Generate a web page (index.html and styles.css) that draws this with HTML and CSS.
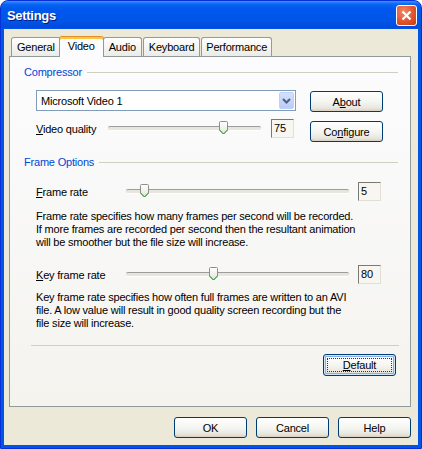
FILE: index.html
```html
<!DOCTYPE html>
<html lang="en">
  <head>
    <meta charset="UTF-8" />
    <meta name="viewport" content="width=device-width, initial-scale=1.0" />
    <title>Settings</title>
    <link rel="stylesheet" href="styles.css">
  </head>
  <body>
    <svg width="0" height="0" class="defs">
      <defs>
        <linearGradient id="thumbFill" x1="0" y1="0" x2="0" y2="1">
          <stop offset="0" stop-color="#ffffff" />
          <stop offset="1" stop-color="#e4e3dc" />
        </linearGradient>
        <symbol id="thumb" viewBox="0 0 9 14">
          <path d="M0.5 1.5 Q0.5 0.5 1.5 0.5 H7.5 Q8.5 0.5 8.5 1.5 V9 L4.5 13 L0.5 9 Z" fill="url(#thumbFill)" stroke="#8e8f86" />
          <path d="M0.5 9 L4.5 13 L8.5 9" fill="none" stroke="#1fa31f" />
        </symbol>
      </defs>
    </svg>

    <div class="window">
      <div class="titlebar">
        <div class="title">Settings</div>
        <div class="close-btn">
          <svg width="11" height="11" viewBox="0 0 11 11">
            <path d="M1.5 1.5 L9.5 9.5 M9.5 1.5 L1.5 9.5" stroke="#fff" stroke-width="2.2" />
          </svg>
        </div>
      </div>

      <div class="client">
        <div class="tabs">
          <div class="tab">General</div>
          <div class="tab active">Video</div>
          <div class="tab">Audio</div>
          <div class="tab">Keyboard</div>
          <div class="tab">Performance</div>
        </div>

        <div class="tab-panel">
          <div class="group-title">Compressor</div>
          <div class="compressor">
            <div class="compressor-fields">
              <div class="combo">
                <span class="combo-text">Microsoft Video 1</span>
                <span class="combo-arrow">
                  <svg width="9" height="6" viewBox="0 0 9 6">
                    <polyline points="1,1 4.5,4.5 8,1" fill="none" stroke="#4d6185" stroke-width="2" />
                  </svg>
                </span>
              </div>
              <div class="quality-row">
                <span class="quality-label"><u>V</u>ideo quality</span>
                <div class="slider quality-slider">
                  <svg class="thumb" style="left: 75%"><use href="#thumb" /></svg>
                </div>
                <div class="value-box">75</div>
              </div>
            </div>
            <div class="compressor-buttons">
              <button class="btn">A<u>b</u>out</button>
              <button class="btn">Co<u>n</u>figure</button>
            </div>
          </div>

          <div class="group-title frame-title">Frame Options</div>
          <div class="slider-row first">
            <span class="row-label"><u>F</u>rame rate</span>
            <div class="slider frame-slider">
              <svg class="thumb" style="left: 8.2%"><use href="#thumb" /></svg>
            </div>
            <div class="value-box">5</div>
          </div>
          <p class="note">
            Frame rate specifies how many frames per second will be recorded.<br>
            If more frames are recorded per second then the resultant animation<br>
            will be smoother but the file size will increase.
          </p>

          <div class="slider-row second">
            <span class="row-label"><u>K</u>ey frame rate</span>
            <div class="slider frame-slider">
              <svg class="thumb" style="left: 39%"><use href="#thumb" /></svg>
            </div>
            <div class="value-box">80</div>
          </div>
          <p class="note note-key">
            Key frame rate specifies how often full frames are written to an AVI<br>
            file. A low value will result in good quality screen recording but the<br>
            file size will increase.
          </p>

          <div class="separator"></div>
          <div class="default-row">
            <button class="btn btn-default"><span class="focus"><u>D</u>efault</span></button>
          </div>
        </div>

        <div class="actions">
          <button class="btn">OK</button>
          <button class="btn">Cancel</button>
          <button class="btn">Help</button>
        </div>
      </div>
    </div>
  </body>
</html>
```

FILE: styles.css
```css
* {
  margin: 0;
  padding: 0;
  box-sizing: border-box;
}

body {
  font-family: "Liberation Sans", Arial, sans-serif;
  font-size: 11px;
  letter-spacing: -0.2px;
  color: #000;
  background-color: #fff;
}

.defs {
  position: absolute;
}

/* window frame + caption */
.window {
  width: 422px;
  height: 449px;
  display: flex;
  flex-direction: column;
  border: 1px solid #0831d9;
  border-radius: 8px 8px 0 0;
  overflow: hidden;
  background: linear-gradient(
    180deg,
    #3d95ff 0px,
    #0a66f2 3px,
    #0058ee 7px,
    #0055e8 20px,
    #004bdc 26px,
    #0055e5 28px,
    #0055e5 100%
  );
}

.titlebar {
  height: 28px;
  display: flex;
  align-items: center;
  padding: 0 4px 0 6px;
}

.title {
  font-size: 13px;
  font-weight: bold;
  letter-spacing: -0.3px;
  color: #fff;
  text-shadow: 1px 1px 0 #0a1883;
  margin-top: 1px;
}

.close-btn {
  margin-left: auto;
  margin-top: 1px;
  width: 21px;
  height: 21px;
  border: 1px solid #fff;
  border-radius: 3px;
  background: radial-gradient(circle at 35% 30%, #f0896a 0%, #e0552c 55%, #c83c14 100%);
  display: flex;
  align-items: center;
  justify-content: center;
}

.client {
  flex: 1;
  margin: 0 3px 3px;
  background-color: #ece9d8;
  padding: 7px 7px 0 5px;
}

/* tabs */
.tabs {
  display: flex;
  align-items: flex-end;
  height: 20px;
  padding-left: 2px;
}

.tab {
  height: 19px;
  padding: 0 5px;
  line-height: 18px;
  border: 1px solid #919b9c;
  border-bottom: none;
  border-radius: 3px 3px 0 0;
  background: linear-gradient(180deg, #ffffff, #ecebe6);
  margin-right: 1px;
}

.tab:last-child {
  padding: 0 4px;
}

.tab.active {
  position: relative;
  z-index: 1;
  height: 21px;
  margin: 0 -1px -1px -3px;
  padding: 0 8px;
  border-top-color: #e68b2c;
  background-color: #fcfcfe;
  background-image: none;
  box-shadow: inset 0 2px 0 #ffc83c;
}

.tab-panel {
  height: 351px;
  border: 1px solid #919b9c;
  background: linear-gradient(180deg, #fcfcfe, #f4f3ee);
  padding: 9px 12px 0 14px;
}

.group-title {
  display: flex;
  align-items: center;
  gap: 5px;
  line-height: 13px;
  color: #0046d5;
}

.group-title::after {
  content: "";
  flex: 1;
  height: 1px;
  background-color: #d0d0bf;
}

/* compressor block */
.compressor {
  display: flex;
  gap: 14px;
  margin: 11px 0 0 12px;
}

.compressor-fields {
  width: 260px;
}

.combo {
  height: 21px;
  display: flex;
  align-items: center;
  padding: 1px;
  border: 1px solid #7f9db9;
  background-color: #fff;
}

.combo-text {
  flex: 1;
  padding-left: 3px;
}

.combo-arrow {
  width: 15px;
  height: 17px;
  display: flex;
  align-items: center;
  justify-content: center;
  border: 1px solid #bfd1fb;
  border-radius: 2px;
  background: linear-gradient(180deg, #d4e0fd, #b9cbf7);
}

.quality-row {
  display: flex;
  align-items: center;
  height: 19px;
  margin-top: 8px;
}

.quality-label {
  width: 72px;
}

.quality-slider {
  width: 153px;
}

.quality-row .value-box {
  margin-left: 10px;
}

.compressor-buttons {
  display: flex;
  flex-direction: column;
  gap: 9px;
  padding-top: 1px;
}

/* sliders */
.slider {
  position: relative;
  height: 19px;
}

.slider::before {
  content: "";
  position: absolute;
  left: 0;
  right: 0;
  top: 7px;
  height: 3px;
  border-top: 1px solid #9d9c99;
  border-bottom: 1px solid #fff;
  border-radius: 2px;
  background-color: #e6e5de;
}

.thumb {
  position: absolute;
  top: 2px;
  width: 9px;
  height: 14px;
  margin-left: -4px;
}

.value-box {
  width: 23px;
  height: 19px;
  padding-left: 2px;
  line-height: 17px;
  border: 1px solid;
  border-color: #7a7a72 #e2e0d6 #e2e0d6 #7a7a72;
  background-color: #f7f6f1;
}

/* frame options */
.frame-title {
  margin-top: 14px;
}

.slider-row {
  display: flex;
  align-items: center;
  height: 19px;
  margin-left: 12px;
}

.slider-row.first {
  margin-top: 13px;
}

.slider-row.second {
  margin-top: 16px;
}

.row-label {
  width: 90px;
}

.frame-slider {
  width: 223px;
}

.slider-row .value-box {
  margin-left: 9px;
}

.note {
  margin: 9px 0 0 12px;
  line-height: 13px;
  white-space: nowrap;
}

.note-key {
  margin-top: 7px;
}

.separator {
  height: 1px;
  margin: 15px -1px 0 7px;
  background-color: #d0d0bf;
}

.default-row {
  display: flex;
  justify-content: flex-end;
  margin: 8px 2px 0 0;
}

/* buttons */
.btn {
  width: 73px;
  height: 21px;
  font-family: inherit;
  font-size: 11px;
  letter-spacing: inherit;
  color: #000;
  border: 1px solid #003c74;
  border-radius: 3px;
  background: linear-gradient(180deg, #ffffff 0%, #f4f4f0 55%, #e8e6dd 85%, #d6d0c5 100%);
}

.btn-default {
  height: 22px;
  padding: 3px;
  box-shadow: inset 0 0 0 1px #cee7ff, inset 0 0 0 2px #89adea;
}

.focus {
  display: flex;
  align-items: center;
  justify-content: center;
  height: 100%;
  border: 1px dotted #333;
}

.actions {
  display: flex;
  justify-content: flex-end;
  gap: 9px;
  margin-top: 10px;
}
```
